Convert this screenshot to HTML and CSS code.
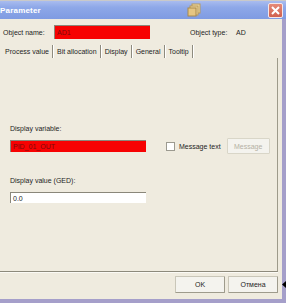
FILE: index.html
```html
<!DOCTYPE html>
<html lang="en">

<head>
    <meta charset="UTF-8">
    <meta name="viewport" content="width=device-width, initial-scale=1.0">
    <title>Parameter</title>
    <link rel="stylesheet" href="styles.css">
</head>

<body>
    <div class="window">
        <div class="titlebar">
            <span class="title">Parameter</span>
            <svg class="app-icon" width="14" height="14" viewBox="0 0 14 14">
                <rect x="5" y="1" width="8" height="9" fill="#f1dca8" stroke="#b89a5a" stroke-width="1" />
                <rect x="3" y="3" width="8" height="9" fill="#ecd39a" stroke="#b89a5a" stroke-width="1" />
                <rect x="1" y="5" width="8" height="8" fill="#e6c683" stroke="#a88a4c" stroke-width="1" />
            </svg>
            <span class="close">
                <svg width="9" height="9" viewBox="0 0 9 9">
                    <path d="M1 1 L8 8 M8 1 L1 8" stroke="#fff" stroke-width="2" />
                </svg>
            </span>
        </div>

        <div class="frame">
            <div class="object-row">
                <span class="label name-label">Object name:</span>
                <span class="field red name-field">AD1</span>
                <span class="label type-label">Object type:</span>
                <span class="label">AD</span>
            </div>

            <ul class="tabs">
                <li class="tab active">Process value</li>
                <li class="tab">Bit allocation</li>
                <li class="tab">Display</li>
                <li class="tab">General</li>
                <li class="tab">Tooltip</li>
            </ul>

            <div class="panel">
                <div class="label">Display variable:</div>
                <div class="var-row">
                    <span class="field red wide">PID_01_OUT</span>
                    <span class="checkbox"></span>
                    <span class="label check-label">Message text</span>
                    <span class="button disabled msg-btn">Message</span>
                </div>
                <div class="label ged-label">Display value (GED):</div>
                <div class="field white wide ged-field">0.0</div>
            </div>

            <div class="footer">
                <span class="button">OK</span>
                <span class="button">Отмена</span>
            </div>
        </div>

        <svg class="cursor" width="4" height="7" viewBox="0 0 4 7">
            <path d="M4 0 L0 3.5 L4 7 Z" fill="#000" />
        </svg>
    </div>
</body>

</html>
```

FILE: styles.css
```css
* {
    margin: 0;
    padding: 0;
    box-sizing: border-box;
}

ul,
li {
    list-style-type: none;
}

body {
    background: #efebdf;
    font-family: "Liberation Sans", Arial, sans-serif;
    font-size: 7px;
    color: #1e1e1e;
}

.window {
    width: 286px;
    height: 303px;
    display: flex;
    flex-direction: column;
    position: relative;
    overflow: hidden;
}

/* title bar */
.titlebar {
    height: 19px;
    display: flex;
    align-items: center;
    background: linear-gradient(#a9bcef 0%, #8ea8e8 35%, #7f9be2 100%);
    border-top: 1px solid #c9c9c9;
}

.title {
    font-size: 8px;
    font-weight: bold;
    color: #fff;
    flex: 1;
    letter-spacing: 0.2px;
}

.app-icon {
    margin-right: 67px;
}

.close {
    width: 15px;
    height: 15px;
    margin-right: 3px;
    border: 1px solid #f3e6ea;
    border-radius: 2px;
    background: linear-gradient(#e58a78, #d0604e);
    display: flex;
    align-items: center;
    justify-content: center;
}

/* window body */
.frame {
    flex: 1;
    display: flex;
    flex-direction: column;
    border-right: 4px solid #a59fca;
    border-bottom: 4px solid #a59fca;
}

.label {
    line-height: 9px;
    white-space: nowrap;
}

.object-row {
    display: flex;
    align-items: center;
    height: 14px;
    margin-top: 6px;
    padding-left: 3px;
}

.name-label {
    width: 51px;
}

.type-label {
    margin-left: 40px;
    width: 46px;
}

.field {
    display: flex;
    align-items: center;
    padding-left: 2px;
    border-top: 1px solid #8a877a;
    border-left: 1px solid #8a877a;
}

.red {
    background: #f70202;
    color: #7a0c0c;
}

.white {
    background: #fff;
}

.name-field {
    width: 96px;
    height: 14px;
}

/* tabs */
.tabs {
    display: flex;
    height: 13px;
    margin-top: 6px;
    padding-left: 3px;
}

.tab {
    display: flex;
    align-items: center;
    padding: 0 3px 0 2px;
    margin-right: 2px;
    border-right: 1px solid #8e8b7e;
    box-shadow: 1px 0 0 #fff;
}

/* panel */
.panel {
    width: 278px;
    height: 214px;
    padding: 66px 0 0 10px;
    border-right: 1px solid #9d9a8a;
    border-bottom: 1px solid #8d8a7c;
    box-shadow: 0 1px 0 #fbfaf5;
}

.var-row {
    display: flex;
    align-items: center;
    height: 16px;
    margin-top: 5px;
}

.wide {
    width: 136px;
    height: 12px;
}

.checkbox {
    width: 9px;
    height: 9px;
    margin-left: 20px;
    background: #fff;
    border: 1px solid #9c9a90;
}

.check-label {
    margin-left: 4px;
}

.button {
    display: flex;
    align-items: center;
    justify-content: center;
    background: #f4f3ee;
    border: 1px solid #c9c6b8;
    border-right-color: #9e9b8c;
    border-bottom-color: #9e9b8c;
    border-radius: 1px;
}

.msg-btn {
    width: 43px;
    height: 16px;
    margin-left: 6px;
}

.disabled {
    color: #b4b1a4;
    border-color: #d9d6c8;
}

.ged-label {
    margin-top: 22px;
}

.ged-field {
    margin-top: 7px;
    height: 11px;
}

/* footer */
.footer {
    display: flex;
    justify-content: flex-end;
    gap: 3px;
    margin-top: 4px;
    padding-right: 4px;
}

.footer .button {
    width: 50px;
    height: 17px;
}

.cursor {
    position: absolute;
    left: 282px;
    top: 281px;
}
```
